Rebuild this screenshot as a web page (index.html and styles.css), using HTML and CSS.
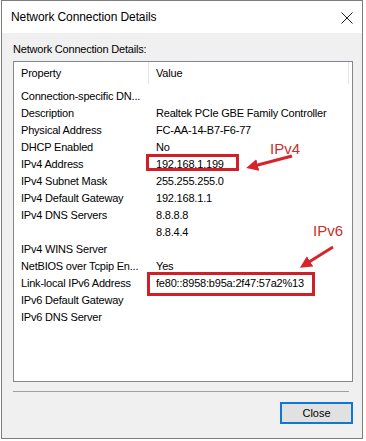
FILE: index.html
```html
<!DOCTYPE html>
<html>
<head>
<title>Network Connection Details</title>
<link rel="stylesheet" href="styles.css">
</head>
<body>
<div class="window">
  <div class="titlebar">
    <span class="title">Network Connection Details</span>
    <svg class="close-x" width="12" height="12" viewBox="0 0 12 12">
      <path d="M0.5 0.5 L11.5 11.5 M11.5 0.5 L0.5 11.5" stroke="#222" stroke-width="1" fill="none"/>
    </svg>
  </div>
  <div class="content">
    <p class="caption">Network Connection Details:</p>
    <div class="listbox">
      <div class="head">
        <div class="hcell prop">Property</div>
        <div class="hcell val">Value</div>
      </div>
      <div class="rows">
        <div class="row"><span>Connection-specific DN...</span><span></span></div>
        <div class="row"><span>Description</span><span>Realtek PCIe GBE Family Controller</span></div>
        <div class="row"><span>Physical Address</span><span>FC-AA-14-B7-F6-77</span></div>
        <div class="row"><span>DHCP Enabled</span><span>No</span></div>
        <div class="row"><span>IPv4 Address</span><span>192.168.1.199</span></div>
        <div class="row"><span>IPv4 Subnet Mask</span><span>255.255.255.0</span></div>
        <div class="row"><span>IPv4 Default Gateway</span><span>192.168.1.1</span></div>
        <div class="row"><span>IPv4 DNS Servers</span><span>8.8.8.8</span></div>
        <div class="row"><span></span><span>8.8.4.4</span></div>
        <div class="row"><span>IPv4 WINS Server</span><span></span></div>
        <div class="row"><span>NetBIOS over Tcpip En...</span><span>Yes</span></div>
        <div class="row"><span>Link-local IPv6 Address</span><span>fe80::8958:b95a:2f47:57a2%13</span></div>
        <div class="row"><span>IPv6 Default Gateway</span><span></span></div>
        <div class="row"><span>IPv6 DNS Server</span><span></span></div>
      </div>
    </div>
    <div class="separator"></div>
    <div class="buttons">
      <button class="btn">Close</button>
    </div>
  </div>
</div>

<!-- red annotations drawn over the dialog -->
<svg class="marks" width="366" height="441" viewBox="0 0 366 441">
  <defs>
    <marker id="head" markerWidth="4" markerHeight="4" refX="2" refY="2" orient="auto" markerUnits="strokeWidth">
      <path d="M0 0 L4 2 L0 4 Z" fill="#d8232a"/>
    </marker>
  </defs>
  <rect x="147.5" y="155.5" width="90" height="14" fill="none" stroke="#cf1f27" stroke-width="3"/>
  <rect x="148.5" y="273.5" width="165" height="21" fill="none" stroke="#cf1f27" stroke-width="3"/>
  <line x1="292" y1="156" x2="252" y2="166.5" stroke="#d8232a" stroke-width="3" marker-end="url(#head)"/>
  <line x1="333" y1="247" x2="305" y2="264.5" stroke="#d8232a" stroke-width="3" marker-end="url(#head)"/>
  <text x="270" y="154" class="tag">IPv4</text>
  <text x="313" y="236" class="tag">IPv6</text>
</svg>
</body>
</html>
```

FILE: styles.css
```css
body {
    margin: 0;
    background: #ffffff;
    position: relative;
    font-family: "Liberation Sans", Arial, sans-serif;
    color: #000;
}

.window {
    margin-left: 1px;
    width: 362px;
    height: 439px;
    box-sizing: border-box;
    border: 1px solid #7d7d7d;
    display: flex;
    flex-direction: column;
}

.titlebar {
    height: 32px;
    background: #fff;
    display: flex;
    align-items: center;
    justify-content: space-between;
    padding: 0 9px 0 9px;
    flex-shrink: 0;
}

.title {
    font-size: 12px;
    letter-spacing: -0.1px;
}

.close-x {
    margin-top: 1px;
}

.content {
    flex: 1;
    background: #f0f0f0;
    padding: 9px 9px 0 11px;
    font-size: 11px;
    letter-spacing: -0.2px;
}

.caption {
    margin: 0 0 5px 0;
    line-height: 14px;
}

.listbox {
    height: 321px;
    box-sizing: border-box;
    border: 1px solid #828790;
    background: #fff;
}

.head {
    display: flex;
    height: 22px;
}

.hcell {
    display: flex;
    align-items: center;
    padding-left: 7px;
    box-sizing: border-box;
}

.prop {
    width: 135px;
    border-right: 1px solid #e5e5e5;
}

.val {
    width: 200px;
    border-right: 1px solid #e5e5e5;
}

.rows {
    padding-top: 3px;
}

.row {
    display: grid;
    grid-template-columns: 135px 1fr;
    height: 17px;
    align-items: center;
}

.row span {
    padding-left: 7px;
    white-space: nowrap;
}

.separator {
    height: 1px;
    background: #a0a0a0;
    margin: 9px 4px 0 0;
}

.buttons {
    display: flex;
    justify-content: flex-end;
    margin-top: 10px;
}

.btn {
    width: 73px;
    height: 22px;
    box-sizing: border-box;
    border: 2px solid #0f78d4;
    background: #e1e1e1;
    font-family: "Liberation Sans", Arial, sans-serif;
    font-size: 11px;
    color: #000;
    padding: 0;
}

.marks {
    position: absolute;
    left: 0;
    top: 0;
    pointer-events: none;
}

.tag {
    font-family: "Liberation Sans", Arial, sans-serif;
    font-size: 15px;
    fill: #c9302c;
}
```
